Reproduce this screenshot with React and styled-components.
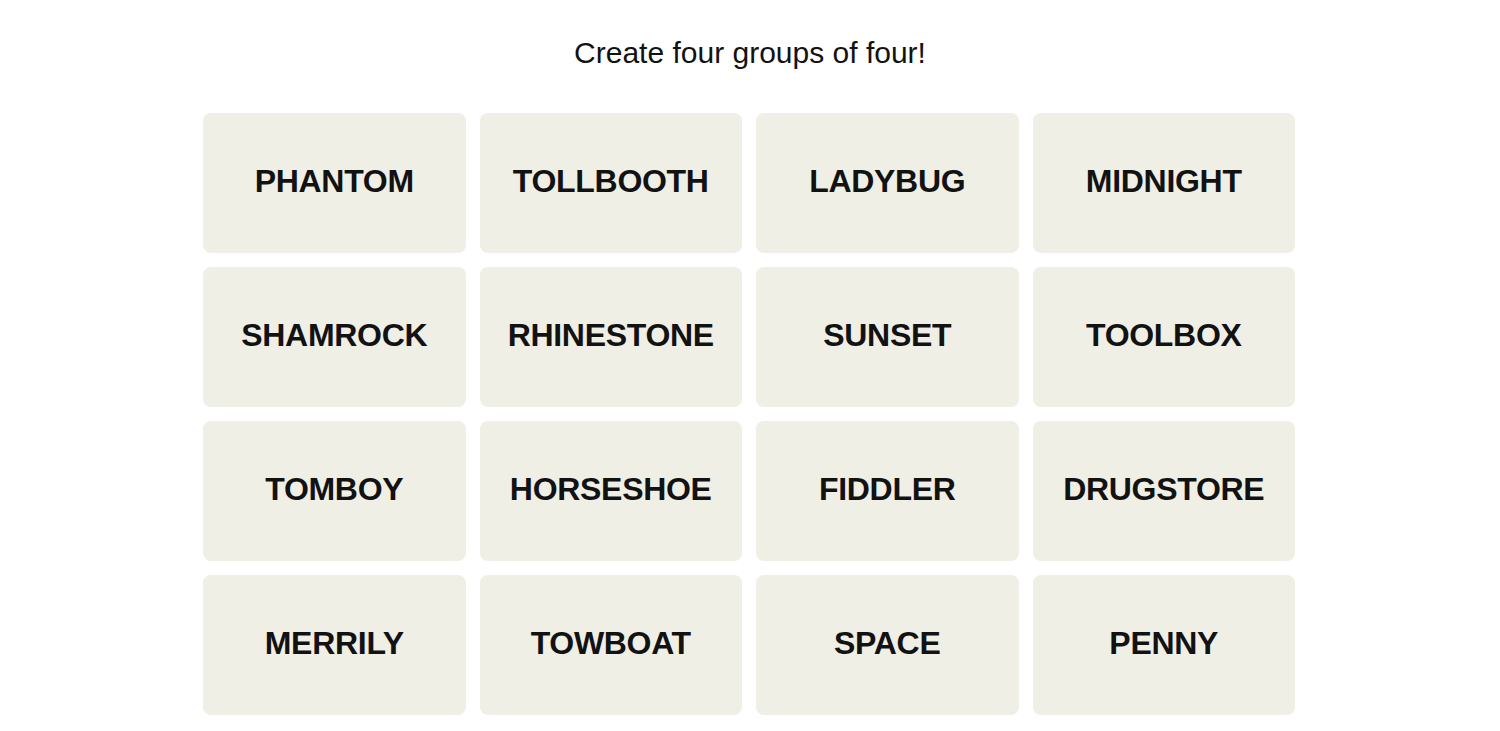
import React from "react";
import styled, { createGlobalStyle } from "styled-components";

const GlobalStyle = createGlobalStyle`
  html, body {
    margin: 0;
    padding: 0;
    background: #ffffff;
  }
  body {
    font-family: "Liberation Sans", Arial, sans-serif;
    color: #121212;
  }
`;

const Page = styled.main`
  display: flex;
  flex-direction: column;
  align-items: center;
  padding-top: 35px;
`;

const Title = styled.h1`
  margin: 0;
  font-family: "Liberation Sans", Arial, sans-serif;
  font-weight: 400;
  font-size: 30px;
  line-height: 36px;
  color: #121212;
`;

const Board = styled.section`
  margin-top: 42px;
  width: 1092px;
  display: grid;
  grid-template-columns: repeat(4, 1fr);
  grid-auto-rows: 140px;
  column-gap: 14px;
  row-gap: 14px;
  transform: translateX(-1px);
`;

const Tile = styled.button`
  border: none;
  margin: 0;
  padding: 0 0 4px 0;
  border-radius: 8px;
  background: #efefe6;
  display: flex;
  align-items: center;
  justify-content: center;
  font-family: "Liberation Sans", Arial, sans-serif;
  font-weight: 700;
  font-size: 32px;
  letter-spacing: -0.3px;
  text-transform: uppercase;
  color: #121212;
  cursor: pointer;
`;

const words = [
  "PHANTOM", "TOLLBOOTH", "LADYBUG", "MIDNIGHT",
  "SHAMROCK", "RHINESTONE", "SUNSET", "TOOLBOX",
  "TOMBOY", "HORSESHOE", "FIDDLER", "DRUGSTORE",
  "MERRILY", "TOWBOAT", "SPACE", "PENNY",
];

export default function App() {
  return (
    <>
      <GlobalStyle />
      <Page>
        <Title>Create four groups of four!</Title>
        <Board>
          {words.map((w) => (
            <Tile key={w}>{w}</Tile>
          ))}
        </Board>
      </Page>
    </>
  );
}
